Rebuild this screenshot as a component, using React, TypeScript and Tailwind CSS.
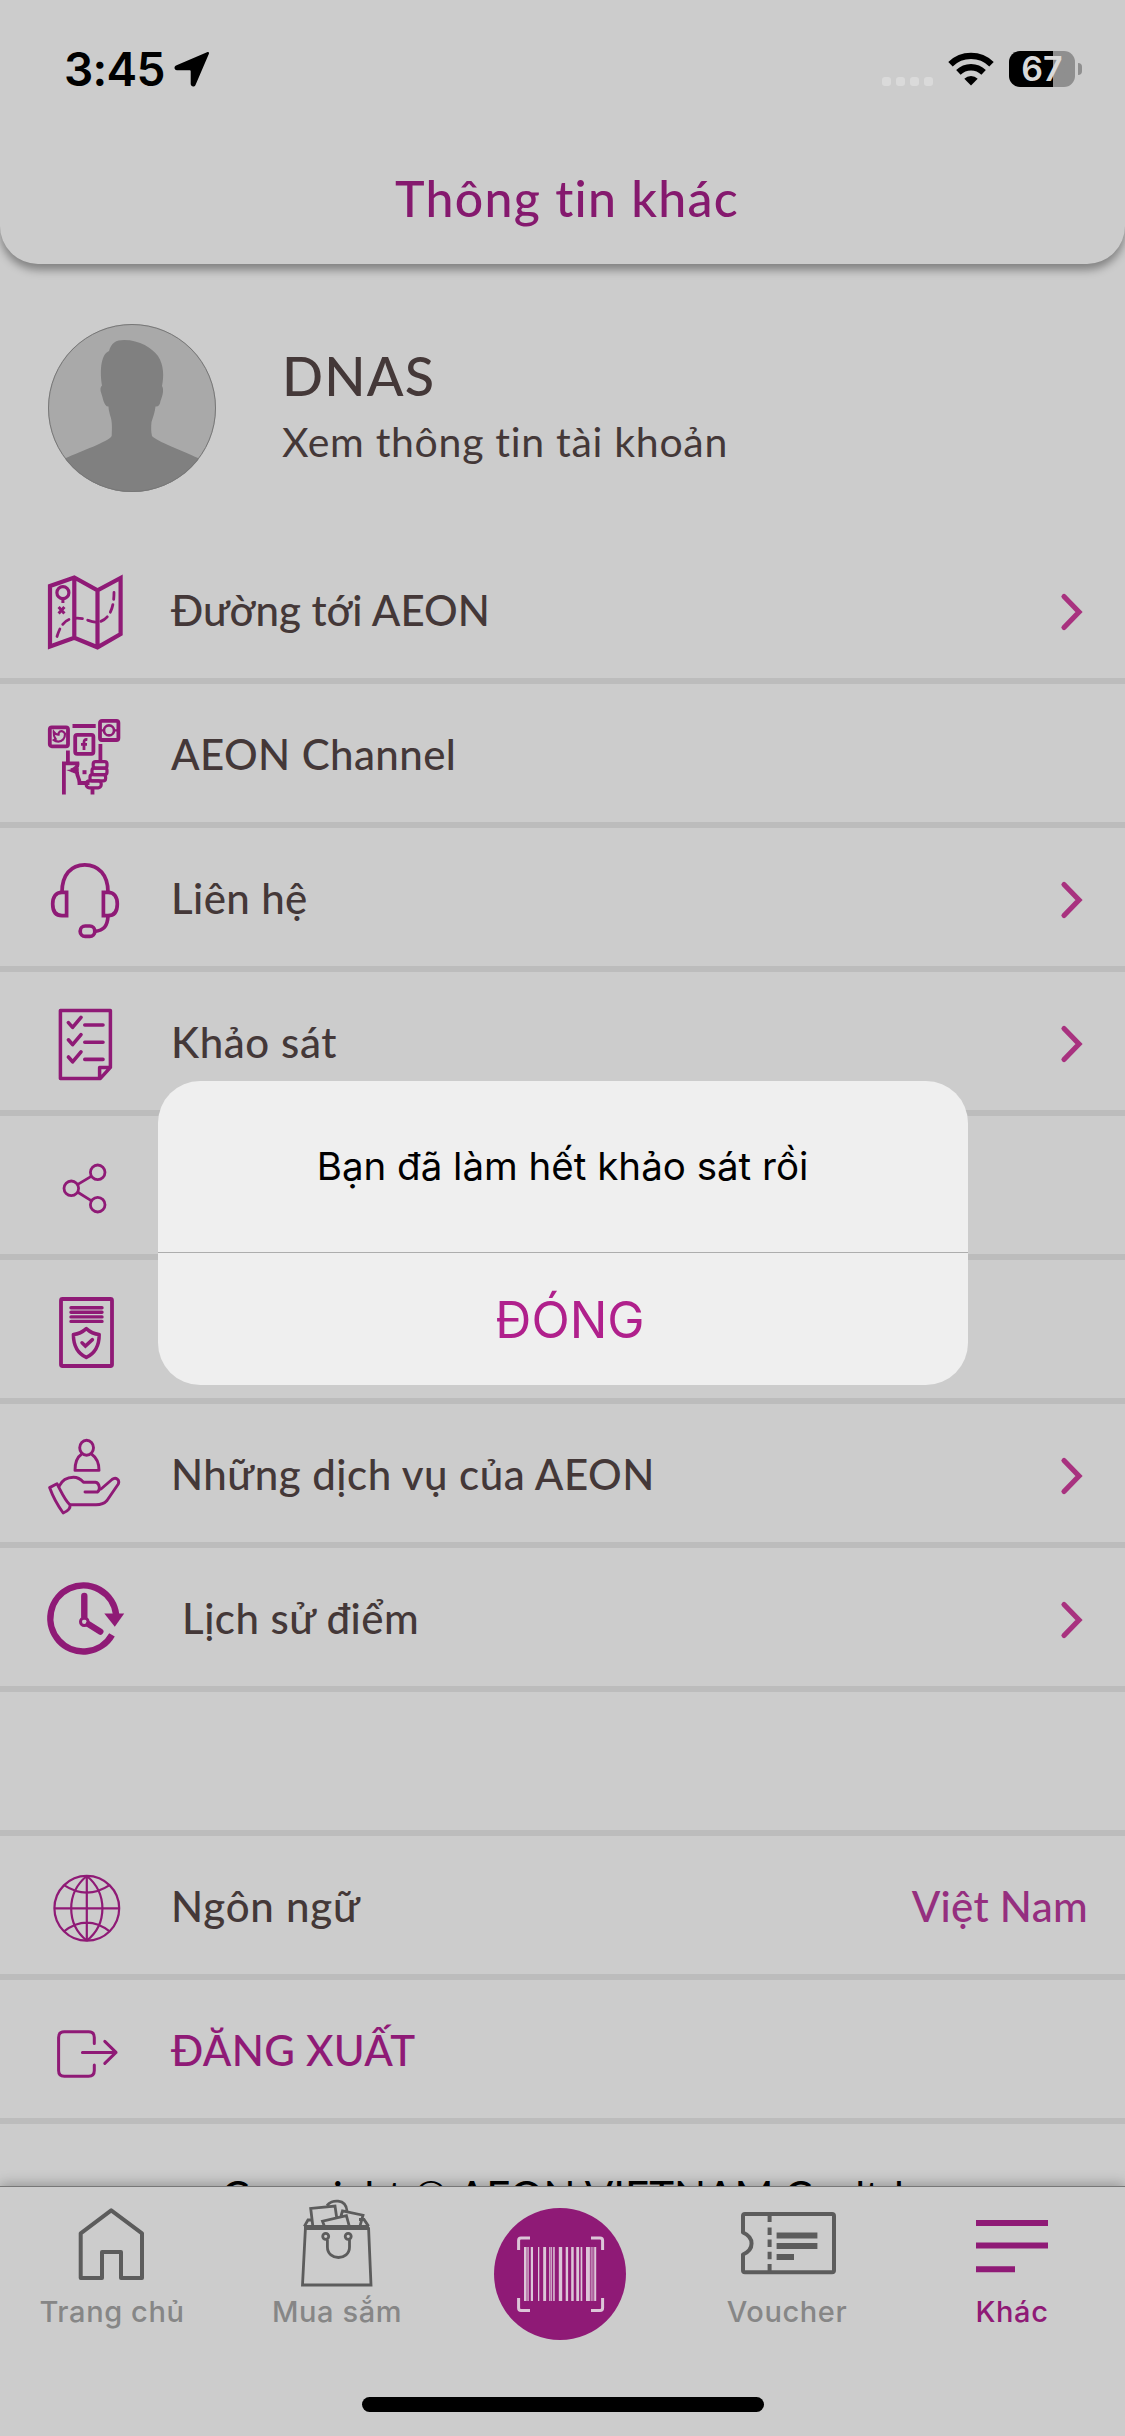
import type { ReactNode } from 'react';
import { clsx } from 'clsx';

function RowIcon({ children }: { children: ReactNode }) {
  return (
    <svg
      viewBox="0 0 80 80"
      className="mt-2 size-20 shrink-0"
      fill="none"
      stroke="#8f1a76"
      strokeWidth="4.2"
    >
      {children}
    </svg>
  );
}

function MapIcon() {
  return (
    <RowIcon>
      <path d="M4 13 28.3 4.5 51.5 17.3 74.6 5V61L51.5 74.3 28.3 64.7 4 73.4ZM28.3 4.3V64.7M51.5 17.3V74.3" />
      <circle cx="16.9" cy="19.7" r="6" strokeWidth="3.2" />
      <path d="M16.9 26v4M12.6 34l5.8 6.4M18.4 34l-5.8 6.4" strokeWidth="3" />
      <path
        d="M11 63.5C14 54 18 46 28.3 45.3 38 44 44 49.5 51.5 49.3 63 47 68 36 68 19.5"
        strokeWidth="2.8"
        strokeDasharray="8 5.5"
        strokeLinecap="round"
      />
    </RowIcon>
  );
}

function ChannelIcon() {
  return (
    <RowIcon>
      <g strokeWidth="3.8">
        <rect x="3.8" y="10.3" width="18.2" height="19" rx="2" />
        <rect x="54" y="3.8" width="18.4" height="19.2" rx="2" />
        <rect x="29.2" y="17.8" width="18.2" height="19" rx="2" />
        <path d="M26.5 9H49.7M21.9 33.5V46M54.4 27V45M17.9 77.4V46.3H31.5C32 50 29.5 52 25 53.4M31 55C31 61 33.5 60 33.5 66H43.5M46.5 71.5V77.4" />
      </g>
      <path d="M23 53.4 32 52v5Z" fill="#8f1a76" strokeWidth="1.5" />
      <path d="M36.5 53.2h4v4h-4z" fill="#8f1a76" stroke="none" />
      <g strokeWidth="3.2">
        <rect x="47.2" y="44.6" width="13.8" height="6.6" rx="2.4" />
        <rect x="46" y="51.2" width="15" height="6.4" rx="2.4" />
        <rect x="44" y="57.6" width="15.6" height="6.2" rx="2.4" />
        <rect x="40.2" y="63.8" width="15" height="7" rx="3" />
      </g>
      <circle cx="63" cy="13.4" r="5" strokeWidth="2.6" />
      <path d="M54 13.4h4M68 13.4h4" strokeWidth="2.4" />
      <path
        d="M7.8 15c1.6 2.2 3.2 2.8 4.8 2.6-.4-3 2.4-4.4 4.8-2.8l1.6 1.8c.2 5-3 8-6.6 8-2 0-3.4-.4-4.6-1.4l1.8-1.2C8 20 7.6 18 7.8 15Z"
        strokeWidth="2.2"
      />
      <path d="M41.4 22.6c-2.6-.4-3.4.6-3.4 3V33M35 27.4h6" strokeWidth="2.8" />
    </RowIcon>
  );
}

function HeadsetIcon() {
  return (
    <RowIcon>
      <g strokeWidth="3.7">
        <path d="M16 31C16 14 25 3.8 38.8 3.8S62 14 62 31M62 55C61.5 65 58 69.5 48.6 70.3" />
        <path d="M20.6 31.4V54.7H16C9.6 54.7 6.7 50 6.7 43S9.6 31.4 16 31.4ZM57.4 31.4V54.7H62C68.4 54.7 71.3 50 71.3 43S68.4 31.4 62 31.4Z" />
        <rect x="34.2" y="65" width="14.6" height="10.4" rx="5" />
      </g>
    </RowIcon>
  );
}

function SurveyIcon() {
  return (
    <RowIcon>
      <path
        d="M14.4 5.4H64.4V62.4L54.4 73.4H14.4ZM53.6 73V62.4H64"
        strokeWidth="3.5"
        strokeLinejoin="round"
      />
      <g strokeWidth="3.6" strokeLinecap="round" strokeLinejoin="round">
        <path d="M22.4 17.6 26.6 22.4 35 12.4M38.8 20H57" />
        <path d="M22.4 34.8 26.6 39.6 35 29.6M38.8 37.2H57" />
        <path d="M22.4 52 26.6 56.8 35 46.8M38.8 54.4H57" />
      </g>
    </RowIcon>
  );
}

function ShareIcon() {
  return (
    <RowIcon>
      <g strokeWidth="2.8">
        <circle cx="51.7" cy="23.3" r="7.3" />
        <circle cx="25.3" cy="39.3" r="7.3" />
        <circle cx="51.7" cy="55.7" r="7.3" />
        <path d="M31.8 35.4 45.2 27.4M31.8 43.3 45.2 51.6" />
      </g>
    </RowIcon>
  );
}

function PolicyIcon() {
  return (
    <RowIcon>
      <rect x="15" y="6" width="51" height="67" rx="1.5" strokeWidth="3.8" />
      <path
        d="M25 14.8H56M25 19.3H56M25 23.9H56M25 28.4H56"
        strokeWidth="3.4"
        strokeLinecap="round"
      />
      <path
        d="M40.3 35.6C36.6 39 32.4 41 27.4 41.4 27.4 52 31 60 40.3 64.4 49.6 60 53.2 52 53.2 41.4 48.2 41 44 39 40.3 35.6Z"
        strokeWidth="3.5"
        strokeLinejoin="round"
      />
      <path d="M36 49.8 39.4 53 46.4 46.6" strokeWidth="3.5" strokeLinecap="round" />
    </RowIcon>
  );
}

function ServiceIcon() {
  return (
    <RowIcon>
      <g strokeWidth="2.9" strokeLinejoin="round" strokeLinecap="round">
        <ellipse cx="40.6" cy="10.8" rx="6.9" ry="7.5" />
        <path d="M35.5 17.2C30.5 20.5 29 26 29 33.4H53C53 26 50.5 20.5 45.7 17.2" />
        <path d="M3.6 50.6 11 46.7C15 54 18 62 24 68 24.6 72 21 74.4 17.2 76 12 69 7 60 3.6 50.6Z" />
        <path d="M13 49.5C16 43 21.5 40.3 27.5 40.3 31.5 40.3 34.5 42 37.5 45.3H49.5C53.8 46 54.5 53 51.5 55H39" />
        <path d="M55 52 66 42.5C70 39.5 74 43 72.3 47L61 63.5C58 67 55 67.8 50 67.8H24.5" />
      </g>
    </RowIcon>
  );
}

function HistoryIcon() {
  return (
    <RowIcon>
      <g transform="translate(.8 1.4)">
        <path d="M69.3 32A33 33 0 1 0 65.2 52.4" strokeWidth="6.4" />
        <path d="M57.5 31H77.4L68 44.4Z" fill="#8f1a76" stroke="none" />
        <path d="M37.5 13.6V34M42 42 53.5 49.2" strokeWidth="6.4" strokeLinecap="round" />
        <circle cx="37.5" cy="39.3" r="3.8" strokeWidth="3" />
      </g>
    </RowIcon>
  );
}

function GlobeIcon() {
  return (
    <RowIcon>
      <g strokeWidth="2.2">
        <circle cx="40.8" cy="39.3" r="32.4" />
        <path d="M40.8 7C20 24 20 55 40.8 71.6M40.8 7C61.6 24 61.6 55 40.8 71.6" />
        <path d="M40.8 7V71.6M8.4 39.3H73.2M18 16.2Q40.8 31.2 63.6 16.2M18 62.4Q40.8 45 63.6 62.4" />
      </g>
    </RowIcon>
  );
}

function LogoutIcon() {
  return (
    <RowIcon>
      <g strokeWidth="3" strokeLinecap="round" strokeLinejoin="round">
        <path d="M48.3 30.5V24.5Q48.3 18.8 42.6 18.8H18.3Q12.6 18.8 12.6 24.5V57.5Q12.6 63.2 18.3 63.2H42.6Q48.3 63.2 48.3 57.5V52" />
        <path d="M36.4 39.4H70M58.8 28.4 70 39.4 58.8 50.4" />
      </g>
    </RowIcon>
  );
}

type MenuRow = {
  label: string;
  icon: ReactNode;
  chevron?: boolean;
  textClass?: string;
};

const menuRows: MenuRow[] = [
  { label: 'Đường tới AEON', icon: <MapIcon />, chevron: true },
  { label: 'AEON Channel', icon: <ChannelIcon />, textClass: 'tracking-[0.4px]' },
  { label: 'Liên hệ', icon: <HeadsetIcon />, chevron: true, textClass: 'tracking-[0.4px]' },
  { label: 'Khảo sát', icon: <SurveyIcon />, chevron: true, textClass: 'tracking-[0.6px]' },
  { label: '', icon: <ShareIcon /> },
  { label: '', icon: <PolicyIcon /> },
  {
    label: 'Những dịch vụ của AEON',
    icon: <ServiceIcon />,
    chevron: true,
    textClass: 'tracking-[0.5px]',
  },
  {
    label: 'Lịch sử điểm',
    icon: <HistoryIcon />,
    chevron: true,
    textClass: 'pl-[11px] tracking-[0.5px]',
  },
];

function Row({ children }: { children?: ReactNode }) {
  return (
    <li className="flex h-36 items-center border-b-6 border-[#bcbcbc] pr-[37px] pl-[46px]">
      {children}
    </li>
  );
}

function RowLabel({ children, className }: { children: ReactNode; className?: string }) {
  return (
    <span className={clsx('ml-[45px] flex-1 pt-0.5 text-[42px] font-medium', className)}>
      {children}
    </span>
  );
}

function Chevron() {
  return (
    <svg viewBox="0 0 30 44" className="mt-1.5 h-11 w-[30px]" fill="none" stroke="#a8327f">
      <path d="M6 6.5 21 22 6 37.5" strokeWidth="5.2" strokeLinecap="round" />
    </svg>
  );
}

function StatusBar() {
  return (
    <div className="flex h-[138px] items-center justify-between pr-[43px] pl-16 text-black">
      <div className="flex items-center gap-[9px]">
        <span className="font-['Inter'] text-[46px] font-semibold tracking-[-0.7px]">3:45</span>
        <svg viewBox="0 0 36 36" className="size-9">
          <path
            d="M33 1.2 2 14.5C-.4 15.7.2 19.2 3 19.3H15.5C16.3 19.3 16.7 19.7 16.7 20.5V33C16.8 35.8 20.3 36.4 21.5 34L34.800 3C35.4 1.500 34.5.6 33 1.2Z"
            fill="currentColor"
          />
        </svg>
      </div>
      <div className="flex items-center gap-[15px]">
        <div className="mt-[24px] flex gap-[5px]">
          <span className="size-[9px] rounded-[3px] bg-[#dadada]" />
          <span className="size-[9px] rounded-[3px] bg-[#dadada]" />
          <span className="size-[9px] rounded-[3px] bg-[#dadada]" />
          <span className="size-[9px] rounded-[3px] bg-[#dadada]" />
        </div>
        <svg viewBox="0 0 46 34" className="h-[34px] w-[46px]" fill="none" stroke="currentColor">
          <path d="M2.5 12.2A29.5 29.5 0 0 1 43.5 12.2" strokeWidth="6.4" />
          <path d="M10.4 20.4A18 18 0 0 1 35.6 20.400" strokeWidth="6.4" />
          <path
            d="M23 33.5 16.3 26.8A9.6 9.6 0 0 1 29.7 26.8Z"
            fill="currentColor"
            stroke="none"
          />
        </svg>
        <div className="flex items-center gap-[3px]">
          <div className="flex h-9 w-[66px] items-center justify-center rounded-[11px] bg-linear-to-r from-black from-67% to-[#8f8f8f] to-67%">
            <span className="font-['Inter'] text-[34px] leading-9 font-semibold text-[#dadada]">
              67
            </span>
          </div>
          <span className="h-3 w-1 rounded-r-full bg-[#8f8f8f]" />
        </div>
      </div>
    </div>
  );
}

function Avatar() {
  return (
    <svg viewBox="0 0 168 168" className="size-[168px] shrink-0">
      <clipPath id="avatar">
        <circle cx="84" cy="84" r="84" />
      </clipPath>
      <g clipPath="url(#avatar)">
        <rect width="168" height="168" fill="#a9a9a9" />
        <path
          d="M63.7 112C64 104 64.500 98 62 91 61 87 60.5 85 60.5 82.5 56 83 55 74 53.5 70 52 66 52 63 54 61.5 52 49 52 31 61 27 63 19 68 16 76 16 92 16 104 24 110 32 116 41 116 53 114 62 116 65 115 71 112.5 77 112 81 110 83 107.5 82.5 107 88 105 93 103.5 98 103 103 103 108 104 112 108 117 135 127 150 134L168 168H0L18 134C33 127 60 118 63.7 112Z"
          fill="#808080"
        />
      </g>
      <circle cx="84" cy="84" r="83.5" fill="none" stroke="#777" />
    </svg>
  );
}

function HomeTabIcon() {
  return (
    <path
      d="M23.7 41.3 54.2 18.4 85 41.3V86H64V60H45V86H23.7Z"
      strokeWidth="4"
      strokeLinejoin="round"
    />
  );
}

function ShopTabIcon() {
  return (
    <g strokeWidth="2.8">
      <path d="M23.4 36.7H86.6L89 93H20.5ZM22.3 34.4 26 28H30M86.6 34.4 82 27.5H77M22 34.4H87" />
      <path d="M30.8 34 28.7 16.4 53 14 54.6 25M45 13.5C49 7.5 64 6 65 19M42.3 34 40.5 29.2 64.4 23.7 67.5 35M59 24 60.5 19 81 23.2 78 34" />
      <circle cx="43.7" cy="44.3" r="3" />
      <circle cx="66.2" cy="44.3" r="3" />
      <path d="M45.4 48V55C45.4 69 67.5 69 67.5 55V48" />
    </g>
  );
}

function VoucherTabIcon() {
  return (
    <g strokeWidth="4">
      <path
        d="M13 22H100Q102 22 102 24V78.3Q102 80.3 100 80.3H13Q11 80.3 11 78.3V62.5C22.4 57.5 22.4 45.5 11 40.5V24Q11 22 13 22Z"
        strokeLinejoin="round"
      />
      <path d="M37.6 24v6M37.6 35.5v7.5M37.6 47.5v7.5M37.6 59.7v7.6M37.6 72v7" />
      <path d="M44.6 43.5H85.4M44.6 54H85.4M44.6 65H62" strokeWidth="5.8" />
    </g>
  );
}

function MoreTabIcon() {
  return <path d="M19 31H91M19 53.4H91M19 77.2H58" strokeWidth="6" />;
}

// [x, width] of every bar
const bars = [
  [30, 2.6],
  [33.4, 1.3],
  [36.8, 2.2],
  [44, 1.3],
  [49.2, 2.9],
  [55.2, 1.3],
  [57.2, 0.9],
  [59.2, 1.5],
  [64.8, 3.4],
  [71.7, 2.4],
  [77.2, 2.5],
  [82.3, 2.8],
  [86.6, 1.7],
  [92, 3.9],
  [96.7, 0.9],
  [98.5, 0.9],
  [100.2, 2],
];

function ScanButton() {
  return (
    <svg viewBox="0 0 132 132" className="-ml-[5px] size-[132px]">
      <circle cx="66" cy="66" r="66" fill="#8f1a76" />
      <path
        d="M36 30H27Q24.6 30 24.6 32.4V42M97 30H106Q108.600 30 108.6 32.4V42M24.6 90V100Q24.6 102.4 27 102.4H36M108.6 90V100Q108.6 102.4 106 102.4H97"
        fill="none"
        stroke="#dcc6d8"
        strokeWidth="3"
      />
      {bars.map(([x, width]) => (
        <rect key={x} x={x} y="39" width={width} height="54" fill="#dcc6d8" />
      ))}
    </svg>
  );
}

type TabProps = { label: string; active?: boolean; children: ReactNode };

function Tab({ label, active, children }: TabProps) {
  return (
    <div className="flex flex-1 flex-col items-center pt-[5px]">
      <svg
        viewBox="0 0 111 100"
        className="h-[100px] w-[111px]"
        fill="none"
        stroke={active ? '#8f1a76' : '#5c5c5c'}
      >
        {children}
      </svg>
      <span
        className={clsx(
          "-ml-px font-['Inter'] text-[29px] leading-10 font-medium tracking-[0.6px]",
          active ? 'text-[#8f1a76]' : 'text-[#868686]',
        )}
      >
        {label}
      </span>
    </div>
  );
}

function TabBar() {
  return (
    <nav className="relative flex h-[250px] shrink-0 flex-col border-t border-[#777] bg-[#cccccc] shadow-[0_-2px_12px_rgba(0,0,0,0.28)]">
      <div className="flex h-[210px]">
        <Tab label="Trang chủ">
          <HomeTabIcon />
        </Tab>
        <Tab label="Mua sắm">
          <ShopTabIcon />
        </Tab>
        <div className="flex flex-1 justify-center pt-[21px]">
          <ScanButton />
        </div>
        <Tab label="Voucher">
          <VoucherTabIcon />
        </Tab>
        <Tab label="Khác" active>
          <MoreTabIcon />
        </Tab>
      </div>
      <div className="mx-auto h-[15px] w-[402px] rounded-full bg-black" />
    </nav>
  );
}

function SurveyAlert() {
  return (
    <div className="absolute inset-0 flex flex-col items-center pt-[1081px]">
      <div className="flex h-[304px] w-[810px] flex-col overflow-hidden rounded-[42px] bg-[#efefef] font-['Inter']">
        <p className="flex h-[171px] items-center justify-center text-[38.5px] text-black">
          Bạn đã làm hết khảo sát rồi
        </p>
        <button className="flex-1 border-t border-[#adadad] pt-0.5 pl-[15px] text-[50px] text-[#b0208c]">
          ĐÓNG
        </button>
      </div>
    </div>
  );
}

export default function App() {
  return (
    <div className="relative flex h-[2436px] w-[1125px] flex-col overflow-hidden bg-[#cccccc] font-['Lato','Noto_Sans',sans-serif] text-[#443838]">
      <header className="relative h-[264px] shrink-0 rounded-b-[38px] bg-[#cccccc] shadow-[0_6px_9px_rgba(0,0,0,0.36)]">
        <StatusBar />
        <h1 className="pt-[22px] pl-[9px] text-center text-[50px] leading-[76px] font-medium tracking-[1.3px] text-[#85196e]">
          Thông tin khác
        </h1>
      </header>
      <main className="min-h-0 flex-1 overflow-hidden">
        <section className="flex h-[276px] gap-[66px] pt-[60px] pl-12">
          <Avatar />
          <div className="pt-5">
            <h2 className="text-[54px] leading-16 font-medium tracking-[1.2px]">DNAS</h2>
            <p className="pt-px text-[41px] leading-[66px] tracking-[0.7px]">
              Xem thông tin tài khoản
            </p>
          </div>
        </section>
        <ul>
          {menuRows.map((row, i) => (
            <Row key={i}>
              {row.icon}
              <RowLabel className={row.textClass}>{row.label}</RowLabel>
              {row.chevron && <Chevron />}
            </Row>
          ))}
          <Row />
          <Row>
            <GlobeIcon />
            <RowLabel className="tracking-[0.8px]">Ngôn ngữ</RowLabel>
            <span className="pt-0.5 text-[42px] font-medium tracking-[0.3px] text-[#952f7f]">
              Việt Nam
            </span>
          </Row>
          <Row>
            <LogoutIcon />
            <RowLabel className="tracking-[0.3px] text-[#8f1a76]">ĐĂNG XUẤT</RowLabel>
          </Row>
        </ul>
        <p className="flex h-36 items-center justify-center text-[42px] text-black">
          Copyright © AEON VIETNAM Co.,ltd
        </p>
      </main>
      <TabBar />
      <SurveyAlert />
    </div>
  );
}
